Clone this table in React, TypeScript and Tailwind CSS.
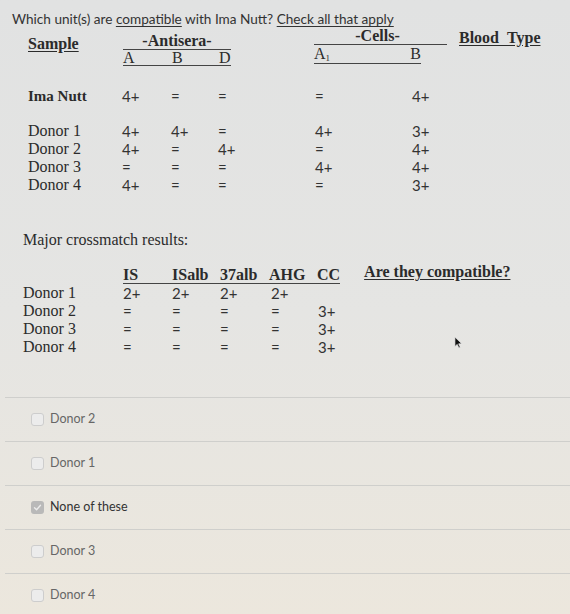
import React from "react";

const serif = "font-['Liberation_Serif',serif]";
const sans = "font-['Lato',sans-serif]";

const antisera = [
  { name: "Ima Nutt", vals: ["4+", "=", "=", "=", "4+"], bold: true },
  { name: "Donor 1", vals: ["4+", "4+", "=", "4+", "3+"] },
  { name: "Donor 2", vals: ["4+", "=", "4+", "=", "4+"] },
  { name: "Donor 3", vals: ["=", "=", "=", "4+", "4+"] },
  { name: "Donor 4", vals: ["4+", "=", "=", "=", "3+"] },
];

const crossmatch = [
  { name: "Donor 1", vals: ["2+", "2+", "2+", "2+", ""] },
  { name: "Donor 2", vals: ["=", "=", "=", "=", "3+"] },
  { name: "Donor 3", vals: ["=", "=", "=", "=", "3+"] },
  { name: "Donor 4", vals: ["=", "=", "=", "=", "3+"] },
];

const options = [
  { label: "Donor 2", checked: false },
  { label: "Donor 1", checked: false },
  { label: "None of these", checked: true },
  { label: "Donor 3", checked: false },
  { label: "Donor 4", checked: false },
];

const val = `${sans} text-[15px] text-[#333]`;

function AntiseraRow({ name, vals, bold }: { name: string; vals: string[]; bold?: boolean }) {
  return (
    <div className="flex h-[18px] items-center leading-[18px]">
      <span className={`w-[94px] ${serif} ${bold ? "text-[15px] font-bold" : "text-[16px]"}`}>
        {name}
      </span>
      <span className={`w-[49px] ${val}`}>{vals[0]}</span>
      <span className={`w-[47px] ${val}`}>{vals[1]}</span>
      <span className={`w-[97px] ${val}`}>{vals[2]}</span>
      <span className={`w-[97px] ${val}`}>{vals[3]}</span>
      <span className={val}>{vals[4]}</span>
    </div>
  );
}

function CrossRow({ name, vals }: { name: string; vals: string[] }) {
  return (
    <div className="flex h-[18px] items-center leading-[18px]">
      <span className={`w-[100px] ${serif} text-[16px]`}>{name}</span>
      <span className={`w-[49px] ${val}`}>{vals[0]}</span>
      <span className={`w-[48px] ${val}`}>{vals[1]}</span>
      <span className={`w-[49px] ${val}`}>{vals[2]}</span>
      <span className={`w-[48px] pl-[2px] ${val}`}>{vals[3]}</span>
      <span className={`pl-[1px] ${val}`}>{vals[4]}</span>
    </div>
  );
}

function Checkbox({ checked }: { checked: boolean }) {
  return checked ? (
    <span className="flex h-[13px] w-[13px] items-center justify-center rounded-[3px] bg-[#b9b9b9]">
      <svg viewBox="0 0 12 12" className="h-[9px] w-[9px]">
        <path d="M2 6.3 4.8 9 10 3" fill="none" stroke="#ececec" strokeWidth="1.8" strokeLinecap="round" strokeLinejoin="round" />
      </svg>
    </span>
  ) : (
    <span className="h-[13px] w-[13px] rounded-[3px] border border-[#cdcdcd] bg-[#ececec]" />
  );
}

export default function App() {
  return (
    <div className="relative min-h-[614px] w-full overflow-hidden bg-gradient-to-b from-[#e1e2e2] via-[#e5e5e3] to-[#ece7dd] text-[#2b2b2b]">
      <div className="pt-[11px] pl-[12px]">
        <p className={`${sans} text-[13.6px] leading-[16px] text-[#333]`}>
          Which unit(s) are <span className="underline underline-offset-2">compatible</span> with Ima
          Nutt? <span className="underline underline-offset-2">Check all that apply</span>
        </p>
      </div>

      <div className="pl-[28px]">
        <div className={`flex items-start ${serif} text-[16px] font-bold`}>
          <span className="mt-[8px] w-[95px] leading-[17px] underline underline-offset-2">Sample</span>
          <div className="mt-[5px] w-[108px]">
            <div className="border-b border-[#444] text-center leading-[17px]">-Antisera-</div>
            <div className="flex border-b border-[#444] font-normal leading-[15px]">
              <span className="w-[49px]">A</span>
              <span className="w-[47px]">B</span>
              <span>D</span>
            </div>
          </div>
          <div className="ml-[83px] w-[133px]">
            <div className="border-b border-[#444] pr-[6px] text-center leading-[17px]">-Cells-</div>
            <div className="flex w-[107px] border-b border-[#444] font-normal leading-[18px]">
              <span className="w-[98px]">
                A<sub className="text-[9px]">1</sub>
              </span>
              <span>B</span>
            </div>
          </div>
          <span className="mt-[2px] ml-[12px] leading-[17px] underline underline-offset-2">
            Blood&nbsp;&nbsp;Type
          </span>
        </div>

        <div className="mt-[21px]">
          <AntiseraRow {...antisera[0]} />
        </div>
        <div className="mt-[17px]">
          {antisera.slice(1).map((r) => (
            <AntiseraRow key={r.name} {...r} />
          ))}
        </div>
      </div>

      <div className="pl-[23px]">
        <p className={`mt-[36px] ${serif} text-[16px] leading-[20px]`}>Major crossmatch results:</p>

        <div className={`mt-[17px] flex items-start ${serif} text-[16px] font-bold`}>
          <div className="ml-[100px] flex border-b border-[#444] leading-[16px]">
            <span className="w-[49px]">IS</span>
            <span className="w-[48px]">ISalb</span>
            <span className="w-[49px]">37alb</span>
            <span className="w-[48px]">AHG</span>
            <span>CC</span>
          </div>
          <span className="-mt-[3px] ml-[24px] leading-[16px] underline underline-offset-2">
            Are they compatible?
          </span>
        </div>

        {crossmatch.map((r) => (
          <CrossRow key={r.name} {...r} />
        ))}
      </div>

      <div className="mt-[41px] pl-[5px]">
        {options.map((o) => (
          <div key={o.label} className="flex h-[44px] items-center border-t border-[#cfcfcc] pl-[26px]">
            <Checkbox checked={o.checked} />
            <span
              className={`ml-[6px] ${sans} text-[12.5px] ${o.checked ? "text-[#333]" : "text-[#666]"}`}
            >
              {o.label}
            </span>
          </div>
        ))}
      </div>

      <svg viewBox="0 0 10 14" className="absolute left-[454px] top-[336px] h-[13px] w-[9px]">
        <path d="M1 1v10.5l2.6-2.4 1.8 4 1.6-.7-1.8-3.9H8.8Z" fill="#111" stroke="#eee" strokeWidth="0.8" />
      </svg>
    </div>
  );
}
